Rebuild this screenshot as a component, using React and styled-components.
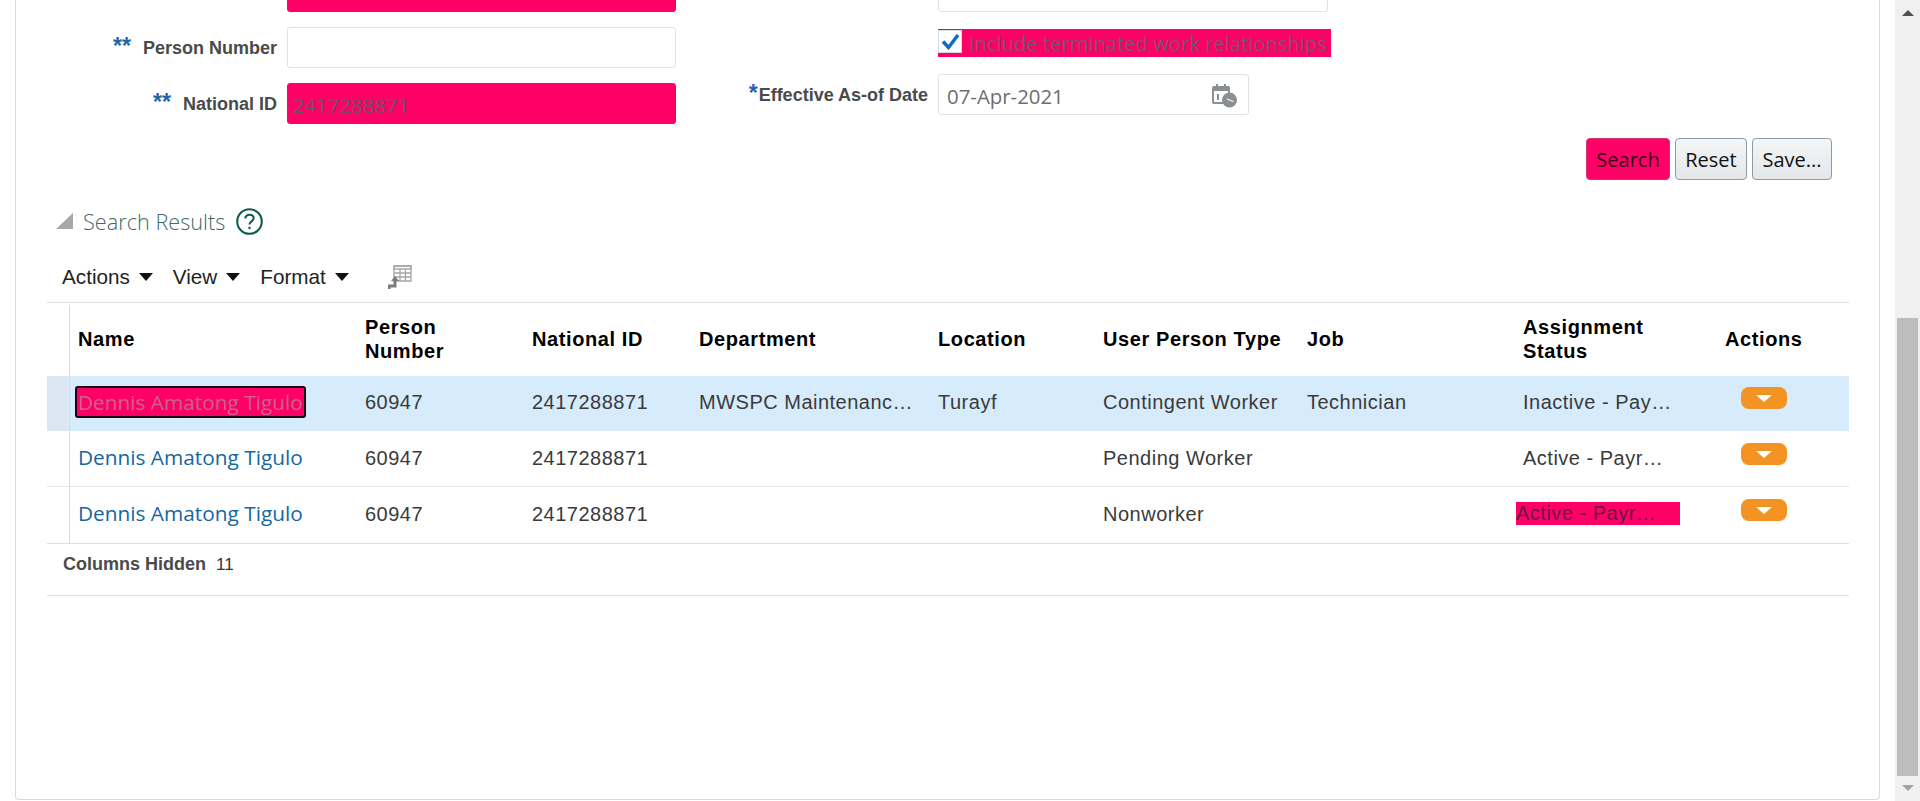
import React from "react";
import styled, { createGlobalStyle } from "styled-components";

const PINK = "#ff0066";
const ARIAL = '"Liberation Sans", Arial, sans-serif';
const SEGOE = '"Open Sans", "Noto Sans", sans-serif';

const GlobalStyle = createGlobalStyle`
  html, body {
    margin: 0;
    padding: 0;
    background: #fff;
    overflow: hidden;
  }
  #root {
    height: 801px;
  }
`;

const Page = styled.div`
  display: flex;
  height: 801px;
  overflow: hidden;
`;

const Main = styled.div`
  flex: 1;
  padding-left: 15px;
  padding-right: 15px;
`;

const Panel = styled.div`
  height: 800px;
  box-sizing: border-box;
  border: 1px solid #d9dcdd;
  border-top: none;
  border-radius: 0 0 4px 4px;
  overflow: hidden;
`;

const Scrollbar = styled.div`
  width: 25px;
  background: #f0f0f0;
  display: flex;
  flex-direction: column;
  align-items: center;
`;

const ScrollArrow = styled.div`
  width: 0;
  height: 0;
  margin: ${(p) => (p.down ? "9px 0 0" : "10px 0 0")};
  border-left: 6px solid transparent;
  border-right: 6px solid transparent;
  ${(p) =>
    p.down
      ? "border-top: 6px solid #a3a3a3;"
      : "border-bottom: 6px solid #505050;"}
`;

const ScrollThumb = styled.div`
  width: 21px;
  height: 458px;
  margin-top: 302px;
  background: #bdbdbd;
`;

const SearchForm = styled.div`
  margin-top: -29px;
  display: grid;
  grid-template-columns: 660px 1fr;
  padding-right: 45px;
`;

const FormColumn = styled.div`
  display: flex;
  flex-direction: column;
`;

const FieldRow = styled.div`
  display: flex;
  align-items: center;
  height: 41px;
  margin-bottom: ${(p) => p.gap || 15}px;
`;

const LabelBox = styled.div`
  width: ${(p) => p.width}px;
  flex: none;
  display: flex;
  justify-content: flex-end;
  align-items: baseline;
  padding-right: 10px;
  box-sizing: border-box;
  margin-top: -2px;
`;

const Stars = styled.span`
  color: #1f66a8;
  font: bold 23px ${ARIAL};
  margin-right: ${(p) => p.space}px;
`;

const Label = styled.label`
  color: #4a4a4a;
  font: bold 18px ${ARIAL};
  white-space: nowrap;
`;

const TextInput = styled.div`
  width: ${(p) => p.width}px;
  height: 41px;
  box-sizing: border-box;
  display: flex;
  align-items: center;
  justify-content: space-between;
  padding: 2px 10px 0 ${(p) => (p.pink ? 5 : 8)}px;
  background: ${(p) => (p.pink ? PINK : "#fff")};
  border: 1px solid ${(p) => (p.pink ? PINK : "#e0e2e3")};
  border-radius: 3px;
  color: ${(p) => (p.pink ? "#6f5264" : "#6e6e6e")};
  font: 400 20.4px ${SEGOE};
`;

const CheckRow = styled.div`
  display: flex;
  width: 393px;
  height: 28px;
  margin-left: 262px;
  margin-top: 2px;
  margin-bottom: 17px;
  background: ${PINK};
  color: #82506e;
  font: 400 20.2px ${SEGOE};
  white-space: nowrap;
  line-height: 29px;
`;

const CheckBox = styled.span`
  flex: none;
  width: 24px;
  height: 23px;
  margin: 1px 7px 0 0;
  background: #fff;
  border: 1px solid #d8dadb;
  box-sizing: border-box;
  display: flex;
  align-items: center;
  justify-content: center;
`;

const ButtonBar = styled.div`
  display: flex;
  justify-content: flex-end;
  gap: 5px;
  padding-right: 47px;
  margin-top: -1px;
`;

const Button = styled.button`
  height: 42px;
  width: ${(p) => p.width}px;
  padding: 0;
  border-radius: 4px;
  border: 1px solid ${(p) => (p.pink ? "#d9326e" : "#8a9ba8")};
  background: ${(p) =>
    p.pink ? PINK : "linear-gradient(#f4f6f7, #e3e7ea)"};
  color: ${(p) => (p.pink ? "#33001a" : "#111")};
  font: 400 20px ${SEGOE};
`;

const SectionHeader = styled.div`
  display: flex;
  align-items: center;
  height: 28px;
  margin: 27px 0 0 40px;
`;

const Disclosure = styled.span`
  width: 0;
  height: 0;
  margin-right: 10px;
  border-bottom: 16px solid #a7a9a9;
  border-left: 17px solid transparent;
`;

const SectionTitle = styled.h2`
  margin: 0 11px 0 0;
  color: #3f6a60;
  font: 300 21.7px ${SEGOE};
`;

const Toolbar = styled.div`
  display: flex;
  align-items: center;
  height: 30px;
  margin: 27px 0 10px 46px;
`;

const MenuItem = styled.span`
  display: flex;
  align-items: center;
  margin-right: 20px;
  color: #222;
  font: 400 20.7px ${ARIAL};
`;

const MenuCaret = styled.span`
  width: 0;
  height: 0;
  margin-left: 9px;
  border-top: 8px solid #111;
  border-left: 7px solid transparent;
  border-right: 7px solid transparent;
`;

const DetachIcon = styled.svg`
  margin-left: 19px;
`;

const TableWrap = styled.div`
  margin: 0 30px 0 31px;
  border-top: 1px solid #dcdfe1;
`;

const COLUMNS = "287px 167px 167px 239px 165px 204px 216px 202px 1fr";

const HeaderRow = styled.div`
  display: grid;
  grid-template-columns: 23px ${COLUMNS};
  height: 73px;
`;

const Gutter = styled.div`
  border-right: 1px solid #d9dcdd;
  background: ${(p) => (p.selected ? "#dbe8f3" : "transparent")};
  margin-top: ${(p) => (p.head ? 2 : 0)}px;
`;

const HeadCell = styled.div`
  display: flex;
  align-items: center;
  padding: 0 0 2px 8px;
  color: #000;
  font: bold 20px/24px ${ARIAL};
  letter-spacing: 0.6px;
`;

const Cell = styled.div`
  padding-left: 8px;
  color: #3a3a3a;
  font: 400 20px/30px ${ARIAL};
  letter-spacing: 0.5px;
  white-space: nowrap;
`;

const PinkCell = styled.span`
  display: block;
  width: 164px;
  height: 23px;
  margin: 3px 0 0 -7px;
  background: ${PINK};
  color: #6b1346;
  line-height: 23px;
`;

const NameLink = styled.a`
  color: #14689f;
  font: 500 20.8px ${SEGOE};
  letter-spacing: 0;
`;

const FocusedName = styled(NameLink)`
  display: inline-block;
  margin: -1px 0 0 -3px;
  background: ${PINK};
  color: #c8648c;
  border: 2px solid #1a0610;
  border-radius: 3px;
  line-height: 28px;
  padding: 0 1px;
`;

const ActionCell = styled.div`
  padding-left: 24px;
`;

const Row = styled.div`
  display: grid;
  grid-template-columns: 23px ${COLUMNS};
  height: ${(p) => p.height}px;
  background: ${(p) => (p.selected ? "#d6ebfc" : "#fff")};
  border-bottom: ${(p) => (p.line ? "1px solid #e4e6e8" : "none")};
  box-sizing: border-box;

  & > ${Cell}, & > ${ActionCell} {
    padding-top: ${(p) => p.top}px;
  }
`;

const ActionButton = styled.span`
  width: 46px;
  height: 22px;
  border-radius: 8px;
  background: #f39323;
  display: flex;
  align-items: center;
  justify-content: center;
`;

const ActionCaret = styled.span`
  width: 0;
  height: 0;
  border-top: 7px solid #fff;
  border-left: 8px solid transparent;
  border-right: 8px solid transparent;
`;

const FooterBar = styled.div`
  display: flex;
  align-items: center;
  gap: 10px;
  height: 41px;
  padding: 0 0 10px 16px;
  border-top: 1px solid #dcdfe1;
  border-bottom: 1px solid #dcdfe1;
`;

const FooterLabel = styled.span`
  color: #4a4a4a;
  font: bold 18px ${ARIAL};
`;

const FooterValue = styled.span`
  color: #333;
  font: 400 17px ${ARIAL};
`;

const rows = [
  {
    type: "Contingent Worker",
    dept: "MWSPC Maintenanc…",
    location: "Turayf",
    job: "Technician",
    status: "Inactive - Pay…",
    selected: true,
    height: 55,
    top: 11
  },
  { type: "Pending Worker", status: "Active - Payr…", line: true, height: 56, top: 12 },
  { type: "Nonworker", status: "Active - Payr…", pinkStatus: true, height: 56, top: 12 }
];

const CalendarIcon = () => (
  <svg width="26" height="24" viewBox="0 0 26 24">
    <rect x="1" y="3" width="16" height="16" rx="1" fill="none" stroke="#8a8f92" strokeWidth="2" />
    <rect x="1" y="3" width="16" height="4" fill="#8a8f92" />
    <rect x="4" y="0" width="2" height="4" fill="#8a8f92" />
    <rect x="12" y="0" width="2" height="4" fill="#8a8f92" />
    <rect x="5" y="10" width="2" height="6" fill="#8a8f92" />
    <circle cx="17.5" cy="16" r="7.5" fill="#8a8f92" />
    <path d="M17.5 16l4 1.5M17.5 16l-2.5-1" stroke="#fff" strokeWidth="1.2" />
  </svg>
);

const HelpIcon = () => (
  <svg width="27" height="27" viewBox="0 0 26 26">
    <circle cx="13" cy="13" r="11.8" fill="none" stroke="#0f5a4a" strokeWidth="2" />
    <path
      d="M9 10.2c0-2.4 1.8-3.7 4-3.7s4 1.3 4 3.4c0 3-4 3-4 6"
      fill="none"
      stroke="#0f5a4a"
      strokeWidth="2"
    />
    <rect x="12" y="18" width="2" height="2.4" fill="#0f5a4a" />
  </svg>
);

const App = () => (
  <>
    <GlobalStyle />
    <Page>
      <Main>
        <Panel>
          <SearchForm>
            <FormColumn>
              <FieldRow>
                <LabelBox width={271} />
                <TextInput width={390} pink />
              </FieldRow>
              <FieldRow>
                <LabelBox width={271}>
                  <Stars space={12}>**</Stars>
                  <Label>Person Number</Label>
                </LabelBox>
                <TextInput width={390} />
              </FieldRow>
              <FieldRow gap={0}>
                <LabelBox width={271}>
                  <Stars space={12}>**</Stars>
                  <Label>National ID</Label>
                </LabelBox>
                <TextInput width={390} pink>
                  2417288871
                </TextInput>
              </FieldRow>
            </FormColumn>
            <FormColumn>
              <FieldRow gap={0}>
                <LabelBox width={262}>
                  <Label>Keywords</Label>
                </LabelBox>
                <TextInput width={390} />
              </FieldRow>
              <CheckRow>
                <CheckBox>
                  <svg width="19" height="17" viewBox="0 0 19 17">
                    <path d="M2 8.5l5.500 6L17 2" fill="none" stroke="#0f6cbd" strokeWidth="3.4" />
                  </svg>
                </CheckBox>
                Include terminated work relationships
              </CheckRow>
              <FieldRow gap={0}>
                <LabelBox width={262}>
                  <Stars space={1}>*</Stars>
                  <Label>Effective As-of Date</Label>
                </LabelBox>
                <TextInput width={311}>
                  07-Apr-2021
                  <CalendarIcon />
                </TextInput>
              </FieldRow>
            </FormColumn>
          </SearchForm>
          <ButtonBar>
            <Button pink width={84}>Search</Button>
            <Button width={72}>Reset</Button>
            <Button width={80}>Save...</Button>
          </ButtonBar>
          <SectionHeader>
            <Disclosure />
            <SectionTitle>Search Results</SectionTitle>
            <HelpIcon />
          </SectionHeader>
          <Toolbar>
            <MenuItem>Actions<MenuCaret /></MenuItem>
            <MenuItem>View<MenuCaret /></MenuItem>
            <MenuItem>Format<MenuCaret /></MenuItem>
            <DetachIcon width="24" height="25" viewBox="0 0 24 25">
              <path d="M6 1h17v15H6z" fill="none" stroke="#a6a6a6" strokeWidth="1.3" />
              <path d="M6 1h17v3H6zM12 4v12M17.500 4v12M6 8h17M6 12h17" fill="none" stroke="#a6a6a6" strokeWidth="1.3" />
              <path d="M1 24v-3h6v-6" fill="none" stroke="#7d7d7d" strokeWidth="3" />
              <path d="M3 16l4-5 4 5z" fill="#7d7d7d" />
            </DetachIcon>
          </Toolbar>
          <TableWrap>
            <HeaderRow>
              <Gutter head />
              <HeadCell>Name</HeadCell>
              <HeadCell>Person<br />Number</HeadCell>
              <HeadCell>National ID</HeadCell>
              <HeadCell>Department</HeadCell>
              <HeadCell>Location</HeadCell>
              <HeadCell>User Person Type</HeadCell>
              <HeadCell>Job</HeadCell>
              <HeadCell>Assignment<br />Status</HeadCell>
              <HeadCell>Actions</HeadCell>
            </HeaderRow>
            {rows.map((r) => (
              <Row key={r.type} selected={r.selected} line={r.line} height={r.height} top={r.top}>
                <Gutter selected={r.selected} />
                <Cell>
                  {r.selected ? (
                    <FocusedName>Dennis Amatong Tigulo</FocusedName>
                  ) : (
                    <NameLink>Dennis Amatong Tigulo</NameLink>
                  )}
                </Cell>
                <Cell>60947</Cell>
                <Cell>2417288871</Cell>
                <Cell>{r.dept}</Cell>
                <Cell>{r.location}</Cell>
                <Cell>{r.type}</Cell>
                <Cell>{r.job}</Cell>
                <Cell>
                  {r.pinkStatus ? <PinkCell>{r.status}</PinkCell> : r.status}
                </Cell>
                <ActionCell>
                  <ActionButton>
                    <ActionCaret />
                  </ActionButton>
                </ActionCell>
              </Row>
            ))}
            <FooterBar>
              <FooterLabel>Columns Hidden</FooterLabel>
              <FooterValue>11</FooterValue>
            </FooterBar>
          </TableWrap>
        </Panel>
      </Main>
      <Scrollbar>
        <ScrollArrow />
        <ScrollThumb />
        <ScrollArrow down />
      </Scrollbar>
    </Page>
  </>
);

export default App;
